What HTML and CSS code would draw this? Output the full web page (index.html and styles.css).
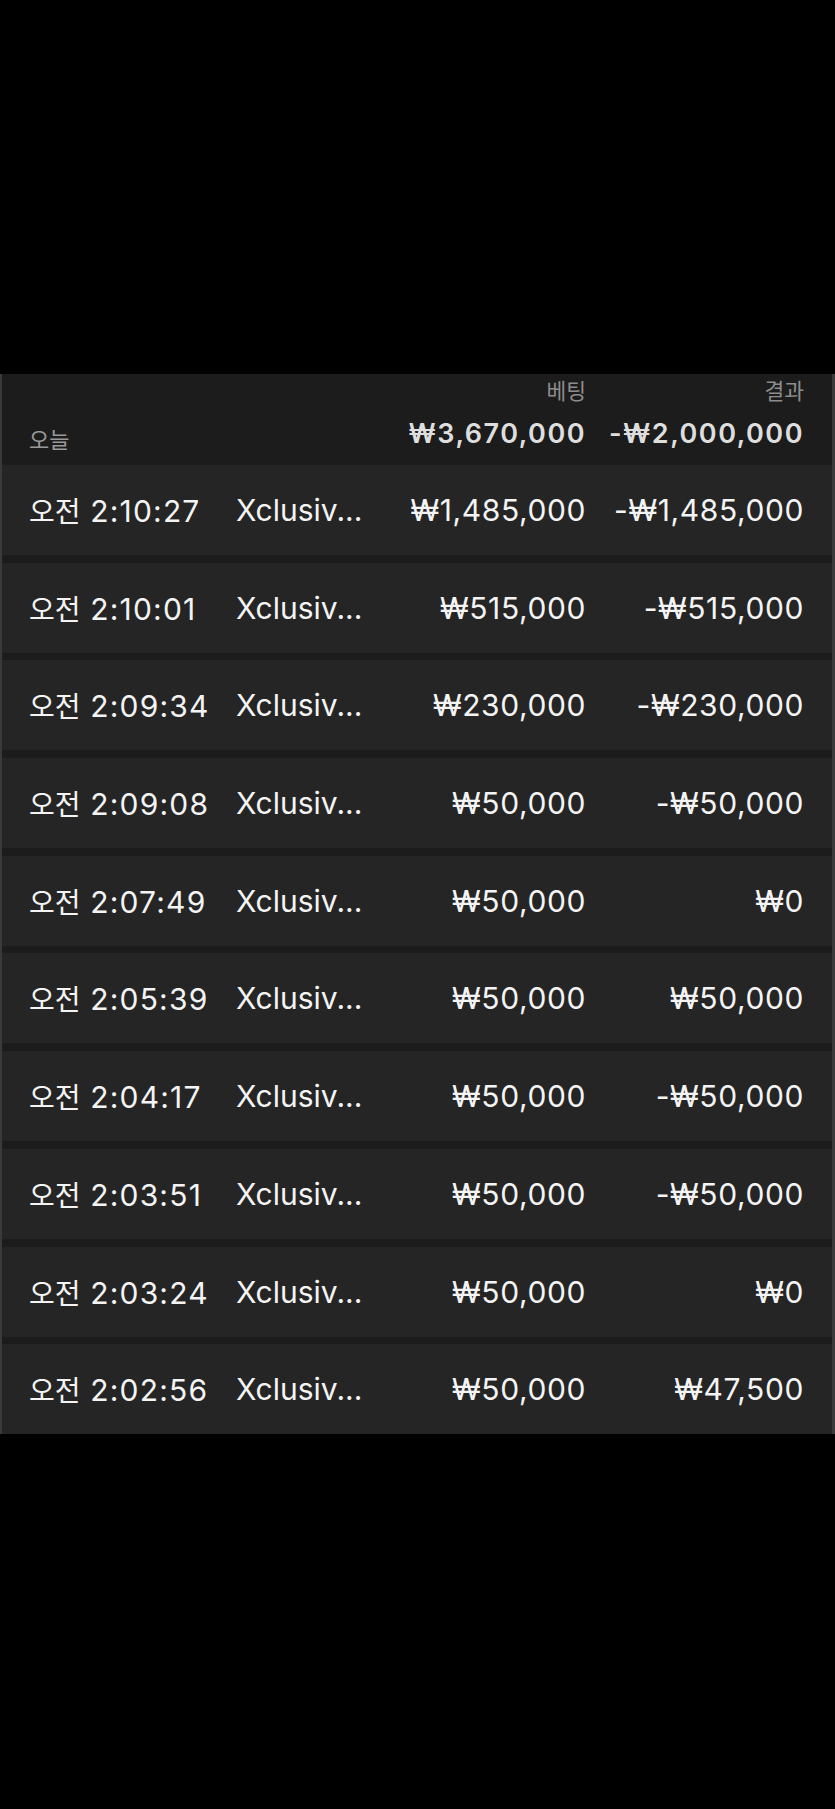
FILE: index.html
```html
<!DOCTYPE html>
<html lang="ko">
<head>
    <meta charset="UTF-8">
    <meta name="viewport" content="width=device-width, initial-scale=1.0">
    <title>베팅 내역</title>
    <link rel="stylesheet" href="styles.css">
</head>
    <body>
        <div class="panel">
            <div class="summary">
                <div class="day">오늘</div>
                <div class="total bet-col">
                    <span class="label">베팅</span>
                    <span class="sum">₩3,670,000</span>
                </div>
                <div class="total result-col">
                    <span class="label">결과</span>
                    <span class="sum">-₩2,000,000</span>
                </div>
            </div>
            <div class="list">
                <div class="row"><span class="time"><span class="ampm">오전</span> 2:10:27</span><span class="game">Xclusiv...</span><span class="amount">₩1,485,000</span><span class="amount">-₩1,485,000</span></div>
                <div class="row"><span class="time"><span class="ampm">오전</span> 2:10:01</span><span class="game">Xclusiv...</span><span class="amount">₩515,000</span><span class="amount">-₩515,000</span></div>
                <div class="row"><span class="time"><span class="ampm">오전</span> 2:09:34</span><span class="game">Xclusiv...</span><span class="amount">₩230,000</span><span class="amount">-₩230,000</span></div>
                <div class="row"><span class="time"><span class="ampm">오전</span> 2:09:08</span><span class="game">Xclusiv...</span><span class="amount">₩50,000</span><span class="amount">-₩50,000</span></div>
                <div class="row"><span class="time"><span class="ampm">오전</span> 2:07:49</span><span class="game">Xclusiv...</span><span class="amount">₩50,000</span><span class="amount">₩0</span></div>
                <div class="row"><span class="time"><span class="ampm">오전</span> 2:05:39</span><span class="game">Xclusiv...</span><span class="amount">₩50,000</span><span class="amount">₩50,000</span></div>
                <div class="row"><span class="time"><span class="ampm">오전</span> 2:04:17</span><span class="game">Xclusiv...</span><span class="amount">₩50,000</span><span class="amount">-₩50,000</span></div>
                <div class="row"><span class="time"><span class="ampm">오전</span> 2:03:51</span><span class="game">Xclusiv...</span><span class="amount">₩50,000</span><span class="amount">-₩50,000</span></div>
                <div class="row"><span class="time"><span class="ampm">오전</span> 2:03:24</span><span class="game">Xclusiv...</span><span class="amount">₩50,000</span><span class="amount">₩0</span></div>
                <div class="row"><span class="time"><span class="ampm">오전</span> 2:02:56</span><span class="game">Xclusiv...</span><span class="amount">₩50,000</span><span class="amount">₩47,500</span></div>
            </div>
        </div>
    </body>
</html>
```

FILE: styles.css
```css
body
{
    margin: 0;
    padding-top: 374px;
    height: 1809px;
    box-sizing: border-box;
    background-color: black;
    font-family: Inter, "Noto Sans CJK KR", sans-serif;
}
.panel
{
    background: #1c1c1c;
    border-left: 2px solid #3a3a3a;
    border-right: 3px solid #3a3a3a;
}
/* header with totals */
.summary
{
    display: grid;
    grid-template-columns: 1fr 200px 218px;
    height: 91px;
    box-sizing: border-box;
    padding: 4px 28px 11px 27px;
}
.day
{
    align-self: end;
    margin-bottom: 0;
    font-family: "Noto Sans CJK KR", sans-serif;
    font-size: 22px;
    line-height: 32px;
    color: #9a9a9a;
}
.total
{
    display: flex;
    flex-direction: column;
    align-items: flex-end;
}
.label
{
    font-family: "Noto Sans CJK KR", sans-serif;
    font-size: 21.5px;
    line-height: 24px;
    color: #8d8d8d;
}
.sum
{
    margin-top: 12px;
    font-size: 27px;
    line-height: 40px;
    font-weight: 600;
    letter-spacing: 1.5px;
    color: #dedede;
}
/* rows */
.list
{
    display: flex;
    flex-direction: column;
    gap: 7.7px;
}
.row
{
    display: grid;
    grid-template-columns: 207px 1fr 200px 218px;
    align-items: center;
    height: 90px;
    padding: 0 28px 0 27px;
    background: #252525;
    color: #f4f4f4;
    font-size: 30px;
}
.time
{
    white-space: nowrap;
    letter-spacing: 1.2px;
}
.ampm
{
    font-size: 28px;
    letter-spacing: 0;
}
.amount
{
    text-align: right;
    white-space: nowrap;
    letter-spacing: 0.6px;
}
```
